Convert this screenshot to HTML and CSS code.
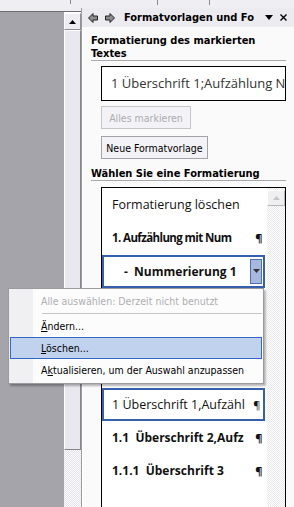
FILE: index.html
```html
<!DOCTYPE html>
<html lang="de">
<head>
    <meta charset="UTF-8">
    <title>Formatvorlagen und Formatierung</title>
    <link rel="stylesheet" href="styles.css">
</head>
<body>
    <div class="ruler"></div>

    <div class="main">
        <!-- Dokumentbereich mit Bildlaufleiste -->
        <div class="editor">
            <div class="doc"></div>
            <div class="vscroll">
                <div class="sb-btn">
                    <svg width="7" height="4" viewBox="0 0 7 4"><polygon points="0,4 3.5,0 7,4" fill="#000"/></svg>
                </div>
                <div class="sb-thumb"></div>
                <div class="sb-track"></div>
            </div>
        </div>

        <!-- Aufgabenbereich -->
        <div class="pane">
            <div class="pane-head">
                <svg class="nav" width="10" height="10" viewBox="0 0 10 10"><polygon points="0.5,5 5,0.5 5,3 9.5,3 9.5,7 5,7 5,9.5" fill="#8c8c8c" stroke="#222" stroke-width="1"/></svg>
                <svg class="nav" width="10" height="10" viewBox="0 0 10 10"><polygon points="9.5,5 5,0.5 5,3 0.5,3 0.5,7 5,7 5,9.5" fill="#8c8c8c" stroke="#222" stroke-width="1"/></svg>
                <span class="pane-title">Formatvorlagen und Fo</span>
                <svg class="pane-menu" width="8" height="5" viewBox="0 0 8 5"><polygon points="0,0 8,0 4,5" fill="#000"/></svg>
                <svg class="pane-close" width="7" height="7" viewBox="0 0 7 7"><path d="M0.5 0.5 L6.5 6.5 M6.5 0.5 L0.5 6.5" stroke="#000" stroke-width="1.4"/></svg>
            </div>

            <div class="pane-body">
                <h2 class="section">Formatierung des markierten Textes</h2>
                <div class="current">1 Überschrift 1;Aufzählung N</div>
                <button class="btn btn-select" disabled>Alles markieren</button>
                <button class="btn btn-new">Neue Formatvorlage</button>

                <h2 class="section section-pick">Wählen Sie eine Formatierung</h2>
                <div class="list">
                    <ul class="items">
                        <li class="item item-plain">Formatierung löschen</li>
                        <li class="item item-bold item-small"><span>1. Aufzählung mit Num</span><span class="pil">¶</span></li>
                        <li class="item item-bold sel">
                            <span class="indent">-&nbsp;&nbsp;Nummerierung 1</span>
                            <span class="drop">
                                <svg width="7" height="4" viewBox="0 0 7 4"><polygon points="0,0 7,0 3.5,4" fill="#333"/></svg>
                            </span>
                        </li>
                        <li class="item"></li>
                        <li class="item"></li>
                        <li class="item"></li>
                        <li class="item sel sel-plain"><span>1 Überschrift 1,Aufzähl</span><span class="pil">¶</span></li>
                        <li class="item item-bold"><span>1.1&nbsp;&nbsp;Überschrift 2,Aufz</span><span class="pil">¶</span></li>
                        <li class="item item-bold"><span>1.1.1&nbsp;&nbsp;Überschrift 3</span><span class="pil">¶</span></li>
                    </ul>
                    <div class="list-scroll">
                        <div class="sb-btn sb-off">
                            <svg width="7" height="4" viewBox="0 0 7 4"><polygon points="0,4 3.5,0 7,4" fill="#c4c4c8"/></svg>
                        </div>
                    </div>
                </div>
            </div>
        </div>
    </div>

    <!-- Kontextmenü der Formatvorlage -->
    <div class="menu">
        <div class="menu-item off">Alle auswählen: Derzeit nicht benutzt</div>
        <div class="menu-sep"></div>
        <div class="menu-item"><u>Ä</u>ndern...</div>
        <div class="menu-item hot"><u>L</u>öschen...</div>
        <div class="menu-item">A<u>k</u>tualisieren, um der Auswahl anzupassen</div>
    </div>
</body>
</html>
```

FILE: styles.css
```css
body {
    margin: 0;
    width: 294px;
    height: 507px;
    overflow: hidden;
    position: relative;
    font-family: "DejaVu Sans Condensed", "DejaVu Sans", sans-serif;
    font-size: 11px;
    color: #000;
    background: #efeef2;
}

.ruler {
    height: 8px;
    background:
        linear-gradient(#8a8a8a, #8a8a8a) 70px 0 / 1px 4px no-repeat,
        linear-gradient(#8a8a8a, #8a8a8a) 157px 0 / 1px 5px no-repeat,
        linear-gradient(#8a8a8a, #8a8a8a) 209px 0 / 1px 5px no-repeat,
        #efeef2;
}

.main {
    display: flex;
    height: 499px;
}

/* Dokumentbereich */
.editor {
    display: flex;
    width: 81px;
    padding-top: 3px;
    box-sizing: border-box;
}

.doc {
    width: 64px;
    background: #a5a4aa;
    border-top: 1px solid #6e6e72;
}

.vscroll {
    width: 17px;
    display: flex;
    flex-direction: column;
    border-top: 1px solid #6e6e72;
    padding-top: 1px;
    background: #fff;
}

.sb-btn {
    height: 17px;
    box-sizing: border-box;
    display: flex;
    align-items: center;
    justify-content: center;
    background: #eeedf2;
    border: 1px solid #fff;
    border-right-color: #8f8f96;
    border-bottom-color: #8f8f96;
}

.sb-thumb {
    height: 420px;
    background: #e9e8ef;
    border: 1px solid #fff;
    border-right-color: #85858c;
    border-bottom-color: #85858c;
    box-sizing: border-box;
}

.sb-track {
    flex: 1;
    background: repeating-conic-gradient(#e6e5ea 0 25%, #fbfbfd 0 50%) 0 0 / 2px 2px;
}

/* Aufgabenbereich */
.pane {
    flex: 1;
    display: flex;
    flex-direction: column;
    background: #fafafa;
    border-left: 1px solid #9c9ca0;
    box-shadow: inset 1px 0 #fff;
}

.pane-head {
    height: 19px;
    display: flex;
    align-items: center;
    padding-left: 6px;
    background: #ecebf0;
}

.nav + .nav {
    margin-left: 7px;
}

.pane-title {
    margin-left: 9px;
    font-weight: bold;
}

.pane-menu {
    margin-left: auto;
    margin-right: 7px;
}

.pane-close {
    margin-right: 9px;
}

.pane-body {
    flex: 1;
    display: flex;
    flex-direction: column;
    align-items: flex-start;
    padding: 0 10px 0 9px;
    min-height: 0;
}

.section {
    align-self: stretch;
    margin: 7px 0 0;
    font-size: 11px;
    line-height: 13px;
    font-weight: bold;
    border-bottom: 1px solid #a9a9ad;
}

.section-pick {
    margin-top: 8px;
}

.current {
    box-sizing: border-box;
    align-self: stretch;
    margin: 5px 0 0 10px;
    height: 35px;
    line-height: 33px;
    padding-left: 9px;
    border: 1px solid #000;
    background: #fff;
    font-family: "Open Sans", sans-serif;
    font-size: 13px;
    color: #333;
    white-space: nowrap;
    overflow: hidden;
}

.btn {
    margin: 5px 0 0 10px;
    height: 23px;
    padding: 0;
    font-family: inherit;
    font-size: 10.5px;
    background: #f3f2f6;
    border: 1px solid #a4a4a8;
    color: #000;
}

.btn-select {
    width: 90px;
    color: #acacb0;
    border-color: #c6c5ca;
}

.btn-new {
    width: 107px;
    margin-top: 7px;
}

.list {
    align-self: stretch;
    flex: 1;
    display: flex;
    margin: 6px 0 0 10px;
    border: 1px solid #000;
    border-bottom: none;
    background: #fff;
    min-height: 0;
}

.items {
    flex: 1;
    margin: 0;
    padding: 0;
    list-style: none;
    font-family: "Open Sans", sans-serif;
    font-size: 12.5px;
    color: #111;
}

.item {
    height: 33.25px;
    box-sizing: border-box;
    display: flex;
    align-items: center;
    justify-content: space-between;
    padding: 0 5px 0 10px;
    white-space: nowrap;
}

.item-bold {
    font-size: 12px;
    font-weight: bold;
}

.item-small {
    font-size: 11.5px;
    letter-spacing: -0.6px;
}

.pil {
    font-size: 11px;
    letter-spacing: 0;
}

.sel {
    margin-right: 2px;
    padding: 0 1px 0 20px;
    border: 2px solid #3460ad;
}

.sel-plain {
    padding: 0 3px 0 8px;
    font-weight: normal;
}

.drop {
    width: 12px;
    height: 25px;
    box-sizing: border-box;
    display: flex;
    align-items: center;
    justify-content: center;
    background: #a7b9dc;
    border: 1px solid #4a6fb3;
}

.list-scroll {
    width: 18px;
    background: repeating-conic-gradient(#e8e8ea 0 25%, #ffffff 0 50%) 0 0 / 2px 2px;
    padding-top: 2px;
}

.sb-off {
    height: 16px;
    background: #efeff2;
    border-color: #fff #b7b7bb #b7b7bb #fff;
}

/* Kontextmenü */
.menu {
    position: absolute;
    left: 8px;
    top: 288px;
    width: 256px;
    height: 96px;
    box-sizing: border-box;
    padding: 1px;
    border: 1px solid #9b9b9f;
    background: linear-gradient(90deg, #f0f0f2 24px, #fcfcfc 24px);
    box-shadow: 2px 2px 2px rgba(0, 0, 0, 0.3);
    font-size: 10.5px;
}

.menu-item {
    height: 22px;
    line-height: 22px;
    padding-left: 31px;
    box-sizing: border-box;
    white-space: nowrap;
}

.menu-item.off {
    color: #aeaeb2;
}

.menu-item.hot {
    background: #c1d2ee;
    border: 1px solid #316ac5;
    line-height: 20px;
    padding-left: 30px;
}

.menu-sep {
    height: 1px;
    margin: 1px 0 1px 32px;
    background: #c5c5c8;
}
```
